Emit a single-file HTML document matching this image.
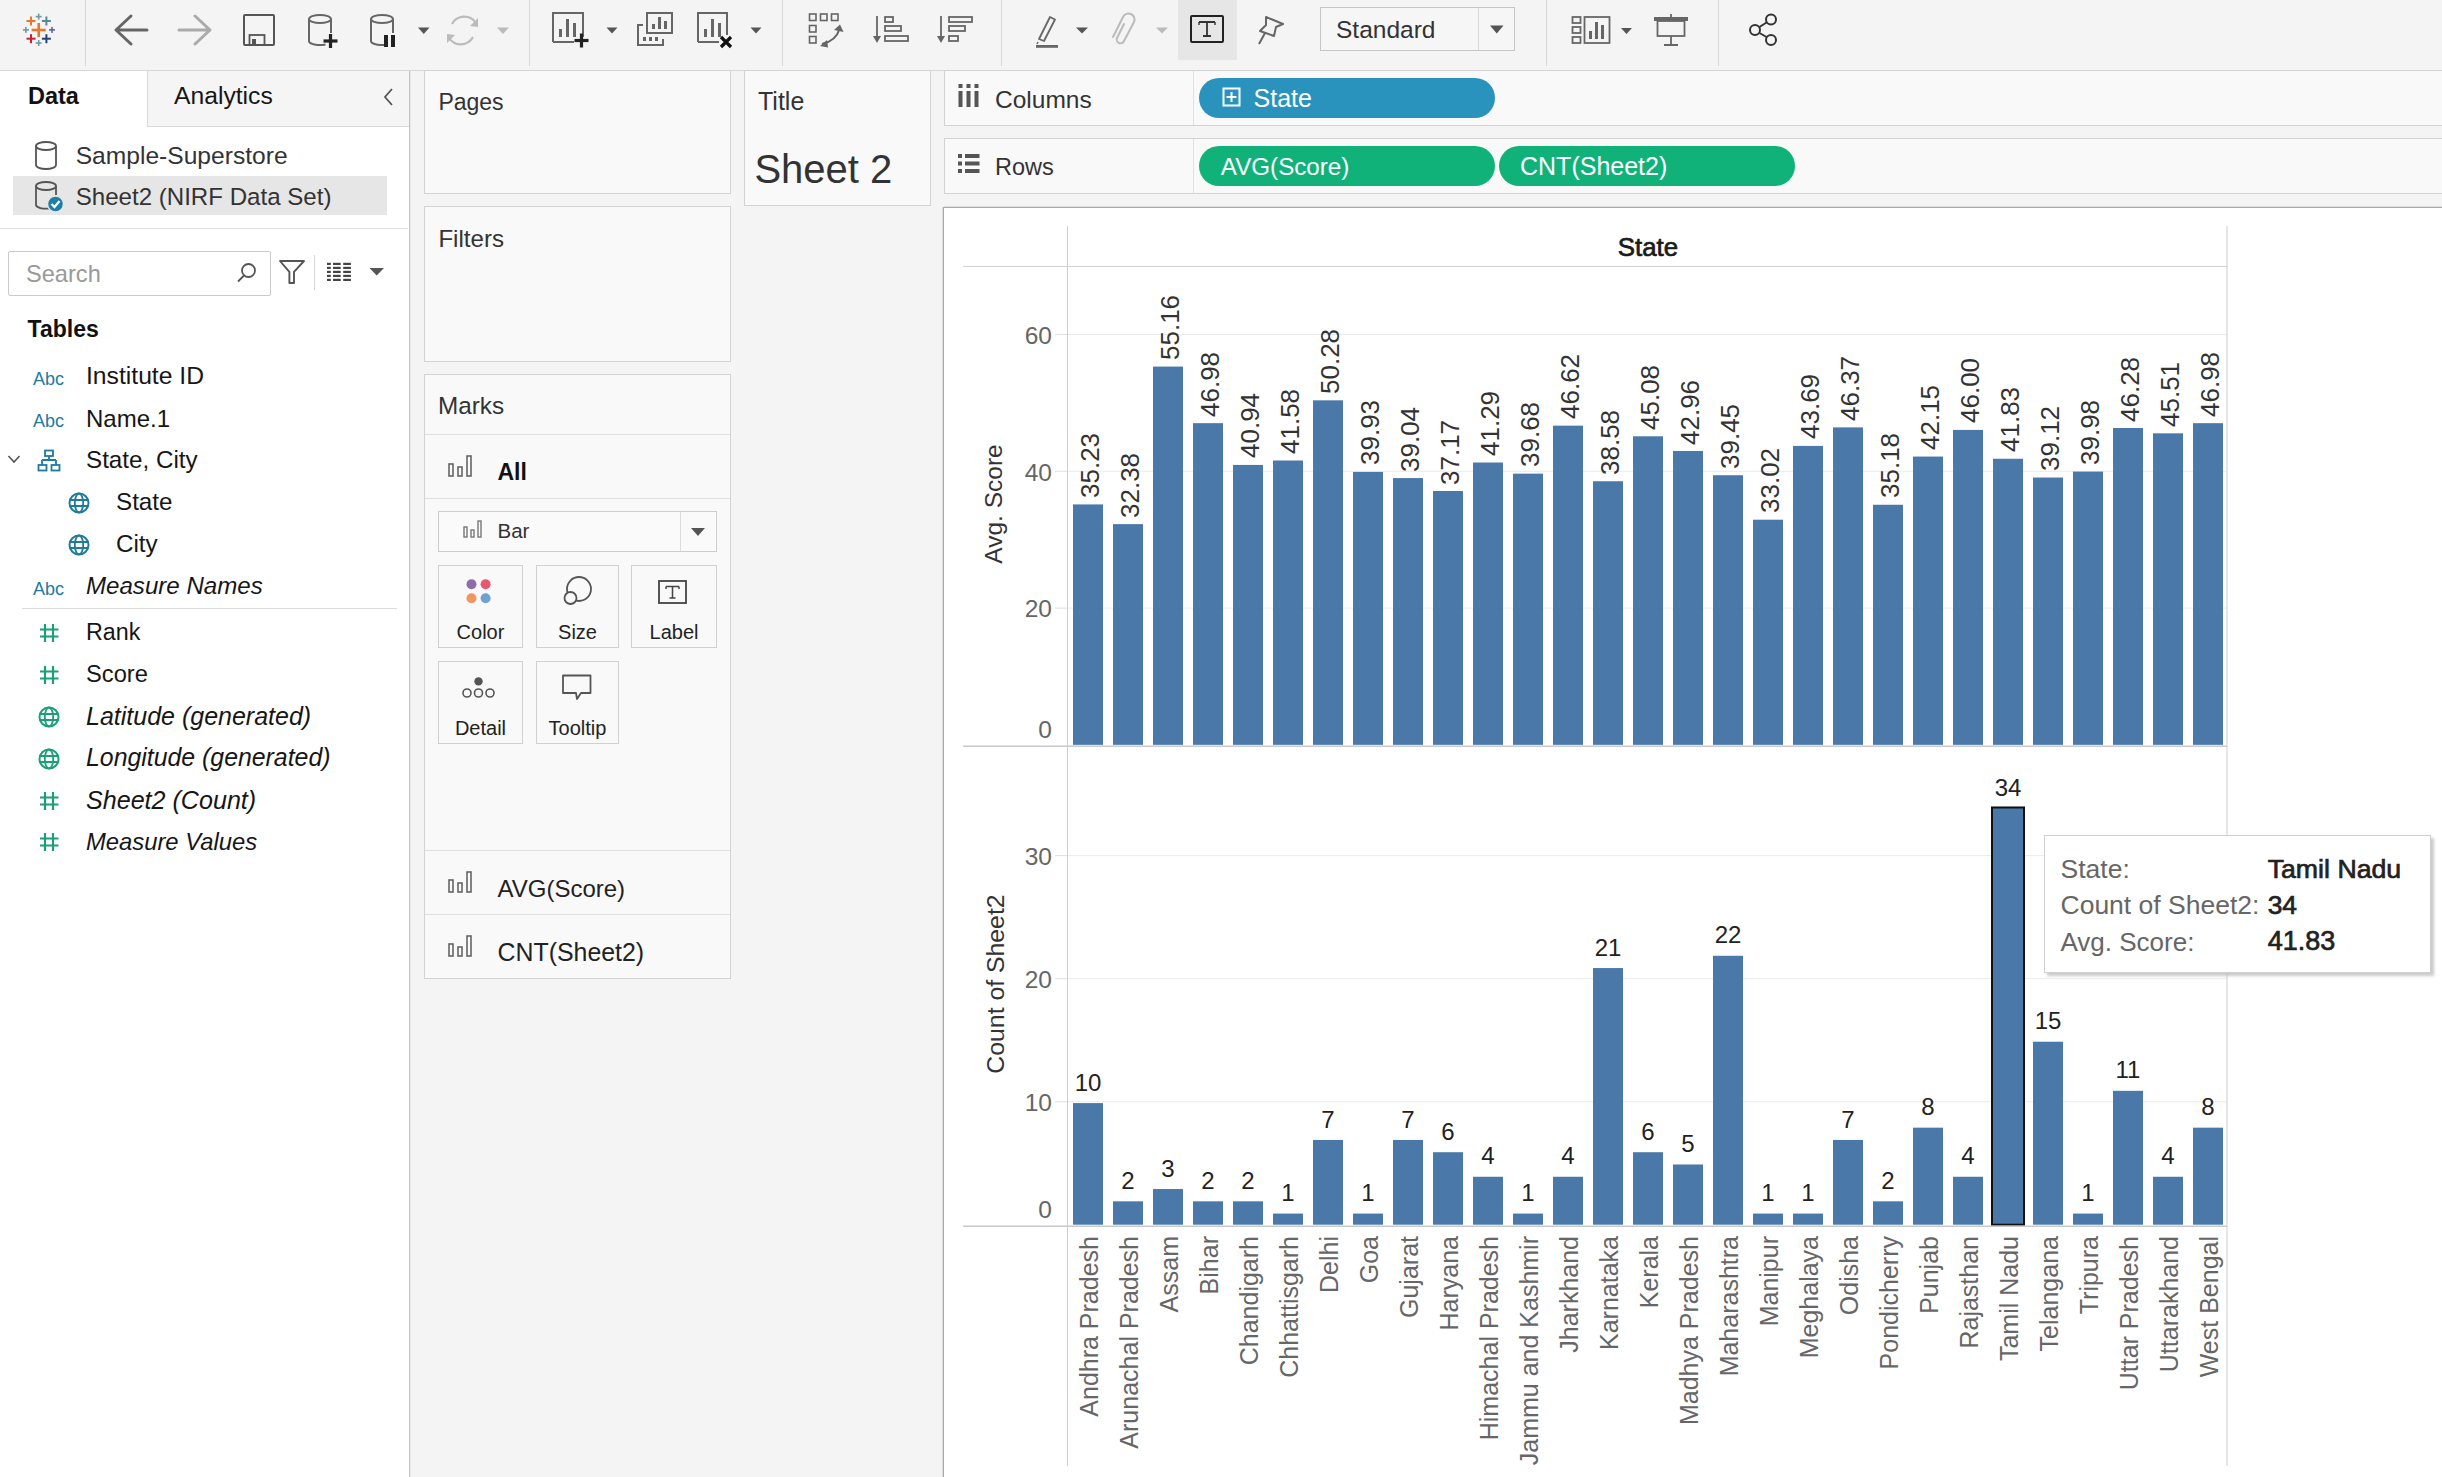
<!DOCTYPE html><html><head><meta charset="utf-8"><style>
html,body{margin:0;padding:0;}
body{width:2442px;height:1477px;overflow:hidden;position:relative;background:#f4f4f4;font-family:"Liberation Sans",sans-serif;}
.t{position:absolute;white-space:pre;}
.b{position:absolute;}
</style></head><body>
<div class="b" style="left:0px;top:0px;width:2442px;height:70px;background:#f4f4f4;"></div>
<div class="b" style="left:0px;top:70px;width:2442px;height:1px;background:#d6d6d6;"></div>
<div class="b" style="left:85px;top:0px;width:1px;height:66px;background:#d9d9d9;"></div>
<div class="b" style="left:529px;top:0px;width:1px;height:66px;background:#d9d9d9;"></div>
<div class="b" style="left:782px;top:0px;width:1px;height:66px;background:#d9d9d9;"></div>
<div class="b" style="left:1001px;top:0px;width:1px;height:66px;background:#d9d9d9;"></div>
<div class="b" style="left:1546px;top:0px;width:1px;height:66px;background:#d9d9d9;"></div>
<div class="b" style="left:1718px;top:0px;width:1px;height:66px;background:#d9d9d9;"></div>
<svg class="b" style="left:0;top:0" width="80" height="70"><rect x="31.700000000000003" y="28.7" width="14" height="2.6" fill="#e8762b"/><rect x="37.400000000000006" y="23" width="2.6" height="14" fill="#e8762b"/><rect x="26.5" y="20.0" width="9.0" height="2" fill="#e8762b"/><rect x="30.0" y="16.5" width="2" height="9.0" fill="#e8762b"/><rect x="41.9" y="20.0" width="9.0" height="2" fill="#5b879b"/><rect x="45.4" y="16.5" width="2" height="9.0" fill="#5b879b"/><rect x="26.5" y="37.7" width="9.0" height="2" fill="#c72037"/><rect x="30.0" y="34.2" width="2" height="9.0" fill="#c72037"/><rect x="41.9" y="37.7" width="9.0" height="2" fill="#1f457e"/><rect x="45.4" y="34.2" width="2" height="9.0" fill="#1f457e"/><rect x="35.7" y="15.8" width="6" height="1.6" fill="#7099a6"/><rect x="37.900000000000006" y="13.600000000000001" width="1.6" height="6" fill="#7099a6"/><rect x="35.7" y="42.2" width="6" height="1.6" fill="#7099a6"/><rect x="37.900000000000006" y="40" width="1.6" height="6" fill="#7099a6"/><rect x="22.9" y="29.099999999999998" width="6" height="1.6" fill="#7099a6"/><rect x="25.099999999999998" y="26.9" width="1.6" height="6" fill="#7099a6"/><rect x="49" y="29.099999999999998" width="6" height="1.6" fill="#5b6591"/><rect x="51.2" y="26.9" width="1.6" height="6" fill="#5b6591"/></svg>
<svg class="b" style="left:0;top:0" width="1200" height="70"><path d="M147 30 H117 M131 16 L116 30 L131 44" stroke="#666" stroke-width="3" fill="none" stroke-linecap="round" stroke-linejoin="round"/><path d="M179 30 H209 M195 16 L210 30 L195 44" stroke="#aaa" stroke-width="3" fill="none" stroke-linecap="round" stroke-linejoin="round"/><rect x="244" y="15" width="30" height="30" stroke="#555" stroke-width="2" fill="none" rx="1"/><rect x="249.5" y="35" width="15" height="10" stroke="#555" stroke-width="1.8" fill="none"/><rect x="252" y="39" width="4" height="5" fill="#555"/><ellipse cx="320.0" cy="19" rx="11.0" ry="4" stroke="#666" stroke-width="2" fill="none"/><path d="M309 19 V41 A11.0 4 0 0 0 325.5 44.5" stroke="#666" stroke-width="2" fill="none"/><path d="M331 19 V33" stroke="#666" stroke-width="2" fill="none"/><rect x="323.5" y="39.4" width="14" height="3.2" fill="#222"/><rect x="328.9" y="34" width="3.2" height="14" fill="#222"/><ellipse cx="382.0" cy="19" rx="11.0" ry="4" stroke="#666" stroke-width="2" fill="none"/><path d="M371 19 V41 A11.0 4 0 0 0 387.5 44.5" stroke="#666" stroke-width="2" fill="none"/><path d="M393 19 V33" stroke="#666" stroke-width="2" fill="none"/><rect x="384" y="35" width="4" height="12" fill="#222"/><rect x="391" y="35" width="4" height="12" fill="#222"/><path d="M418 27.5 H429.5 L423.75 34.0 Z" fill="#555"/><path d="M452 24 A14 14 0 0 1 476 23" stroke="#bbb" stroke-width="2.2" fill="none"/><path d="M473 37 A14 14 0 0 1 449 38" stroke="#bbb" stroke-width="2.2" fill="none"/><path d="M478 18 L478 27 L470 26 Z" fill="#bbb"/><path d="M447 43 L447 34 L455 35 Z" fill="#bbb"/><path d="M497 27.5 H509 L503.0 34.0 Z" fill="#bbb"/><path d="M553 42 V13 H583 V37" stroke="#666" stroke-width="2" fill="none"/><path d="M553 42 H574" stroke="#666" stroke-width="2" fill="none"/><rect x="559" y="29" width="3" height="8" fill="#666"/><rect x="566" y="19" width="3" height="18" fill="#666"/><rect x="573" y="23" width="3" height="14" fill="#666"/><rect x="574.5" y="38.9" width="14" height="3.2" fill="#222"/><rect x="579.9" y="33.5" width="3.2" height="14" fill="#222"/><path d="M606.5 27.5 H617.5 L612.0 33.5 Z" fill="#555"/><rect x="647" y="13" width="25" height="20" stroke="#666" stroke-width="2" fill="none"/><path d="M643 25 H638 V45 H663 V39" stroke="#666" stroke-width="2" fill="none"/><rect x="652" y="24" width="3" height="5" fill="#666"/><rect x="658" y="17" width="3" height="12" fill="#666"/><rect x="664" y="21" width="3" height="8" fill="#666"/><rect x="643" y="37" width="3" height="4" fill="#666"/><rect x="649" y="37" width="3" height="4" fill="#666"/><rect x="655" y="37" width="3" height="4" fill="#666"/><path d="M698 42 V13 H727 V35" stroke="#666" stroke-width="2" fill="none"/><path d="M698 42 H719" stroke="#666" stroke-width="2" fill="none"/><rect x="704" y="29" width="3" height="8" fill="#666"/><rect x="711" y="19" width="3" height="18" fill="#666"/><rect x="718" y="23" width="3" height="14" fill="#666"/><path d="M721 37 L731 47 M731 37 L721 47" stroke="#111" stroke-width="3.2"/><path d="M750.5 27.5 H761.5 L756.0 33.5 Z" fill="#555"/><rect x="809.5" y="14" width="6.5" height="6.5" stroke="#666" stroke-width="1.6" fill="none"/><rect x="820.5" y="14" width="6.5" height="6.5" stroke="#666" stroke-width="1.6" fill="none"/><rect x="831.5" y="14" width="6.5" height="6.5" stroke="#666" stroke-width="1.6" fill="none"/><rect x="809.5" y="25.5" width="6.5" height="6.5" stroke="#666" stroke-width="1.6" fill="none"/><rect x="809.5" y="36.5" width="6.5" height="6.5" stroke="#666" stroke-width="1.6" fill="none"/><path d="M822 44 Q836 41 839.5 29" stroke="#666" stroke-width="2" fill="none"/><path d="M834 30 L840 24.5 L843.5 32 Z" fill="#666"/><path d="M827 40 L820 46 L828 47.5 Z" fill="#666"/><path d="M877 16 V40" stroke="#666" stroke-width="1.8"/><path d="M873 36 L877 43 L881 36 Z" fill="#666"/><rect x="885" y="17" width="8" height="5" stroke="#666" stroke-width="1.8" fill="none"/><rect x="885" y="26" width="16" height="5" stroke="#666" stroke-width="1.8" fill="none"/><rect x="885" y="36" width="23" height="5" stroke="#666" stroke-width="1.8" fill="none"/><path d="M941 16 V40" stroke="#666" stroke-width="1.8"/><path d="M937 36 L941 43 L945 36 Z" fill="#666"/><rect x="949" y="17" width="23" height="5" stroke="#666" stroke-width="1.8" fill="none"/><rect x="949" y="26" width="16" height="5" stroke="#666" stroke-width="1.8" fill="none"/><rect x="949" y="36" width="9" height="5" stroke="#666" stroke-width="1.8" fill="none"/><path d="M1039 39 L1050 17 L1055 19.5 L1044 41 Z" stroke="#666" stroke-width="1.8" fill="none" stroke-linejoin="round"/><path d="M1038 42 L1037 44" stroke="#666" stroke-width="1.5"/><rect x="1036" y="45" width="22" height="2.8" fill="#666"/><path d="M1076 27.5 H1088 L1082.0 33.5 Z" fill="#555"/><path d="M1124 24 L1117 38 A3.5 3.5 0 0 0 1124 41 L1134 22 A6 6 0 0 0 1123 17 L1113 37" stroke="#bbb" stroke-width="2" fill="none" stroke-linecap="round"/><path d="M1156 27.5 H1168 L1162.0 33.5 Z" fill="#bbb"/></svg>
<div class="b" style="left:1178px;top:0px;width:59px;height:60px;background:#e6e6e6;"></div>
<svg class="b" style="left:1100px;top:0" width="250" height="70" viewBox="1100 0 250 70"><rect x="1191" y="16" width="32" height="26" stroke="#222" stroke-width="2" fill="none" rx="1"/><path d="M1199 22 H1215 M1207 22 V36 M1203 36 H1211" stroke="#333" stroke-width="1.8" fill="none"/><path d="M1199 22 V25 M1215 22 V25" stroke="#333" stroke-width="1.4"/><path d="M1266 17 L1283 24 L1276 27 L1274 36 L1260 31 L1266 25 Z" stroke="#666" stroke-width="2" fill="none" stroke-linejoin="round"/><path d="M1265 33 L1259 44" stroke="#666" stroke-width="2"/></svg>
<div class="b" style="left:1320px;top:7px;width:195px;height:44px;background:#f6f6f6;border:1px solid #c6c6c6;box-sizing:border-box;"></div>
<div class="b" style="left:1478px;top:8px;width:1px;height:42px;background:#d8d8d8;"></div>
<div class="t" style="left:1336.0px;top:18.1px;font-size:24.5px;line-height:24.5px;color:#333;">Standard</div>
<svg class="b" style="left:1450px;top:0" width="400" height="70" viewBox="1450 0 400 70"><path d="M1490 25.5 H1503.5 L1496.75 33.5 Z" fill="#555"/><rect x="1572.5" y="17" width="8" height="6" stroke="#666" stroke-width="1.8" fill="none"/><rect x="1572.5" y="27" width="8" height="6" stroke="#666" stroke-width="1.8" fill="none"/><rect x="1572.5" y="37" width="8" height="6" stroke="#666" stroke-width="1.8" fill="none"/><rect x="1584.5" y="17" width="25" height="26" stroke="#666" stroke-width="1.8" fill="none"/><rect x="1589" y="31" width="3" height="8" fill="#666"/><rect x="1595" y="22" width="3" height="17" fill="#666"/><rect x="1601" y="25" width="3" height="14" fill="#666"/><path d="M1621 28 H1632 L1626.5 34 Z" fill="#555"/><rect x="1654" y="17" width="34" height="4" fill="#666"/><rect x="1657.5" y="21" width="27" height="15" stroke="#666" stroke-width="1.8" fill="none"/><path d="M1671 14 V17 M1671 36 V44 M1664 45 H1678" stroke="#666" stroke-width="1.8"/><circle cx="1771" cy="19.5" r="5" stroke="#333" stroke-width="2" fill="none"/><circle cx="1755" cy="30" r="5" stroke="#333" stroke-width="2" fill="none"/><circle cx="1771" cy="40" r="5" stroke="#333" stroke-width="2" fill="none"/><path d="M1759.5 27 L1766.5 22.5 M1759.5 33 L1766.5 37" stroke="#333" stroke-width="2"/></svg>
<div class="b" style="left:0px;top:71px;width:409px;height:1406px;background:#ffffff;"></div>
<div class="b" style="left:409px;top:71px;width:1px;height:1406px;background:#c6c6c6;"></div>
<div class="b" style="left:410px;top:71px;width:1px;height:1406px;background:#e6e6e6;"></div>
<div class="b" style="left:147px;top:71px;width:262px;height:56px;background:#f5f5f5;"></div>
<div class="b" style="left:147px;top:71px;width:1px;height:56px;background:#d9d9d9;"></div>
<div class="b" style="left:147px;top:126px;width:262px;height:1px;background:#d9d9d9;"></div>
<div class="t" style="left:28.0px;top:85.1px;font-size:23.5px;line-height:23.5px;color:#111;font-weight:700;">Data</div>
<div class="t" style="left:174.0px;top:84.1px;font-size:24.7px;line-height:24.7px;color:#161616;">Analytics</div>
<svg class="b" style="left:378px;top:84px" width="20" height="26" viewBox="0 0 20 26"><path d="M14 5 L7 13 L14 21" stroke="#555" stroke-width="1.8" fill="none"/></svg>
<svg class="b" style="left:35px;top:141px" width="24" height="31" viewBox="0 0 24 31"><ellipse cx="11" cy="5" rx="10" ry="4" stroke="#555" stroke-width="1.8" fill="none"/><path d="M1 5 V24 A10 4 0 0 0 21 24 V5" stroke="#555" stroke-width="1.8" fill="none"/></svg>
<div class="t" style="left:75.7px;top:143.8px;font-size:24.6px;line-height:24.6px;color:#333;">Sample-Superstore</div>
<div class="b" style="left:13px;top:176px;width:374px;height:39px;background:#e6e6e6;"></div>
<svg class="b" style="left:35px;top:181px" width="32" height="34" viewBox="0 0 32 34"><ellipse cx="11" cy="5" rx="10" ry="4" stroke="#555" stroke-width="1.8" fill="none"/><path d="M1 5 V24 A10 4 0 0 0 14 27.5" stroke="#555" stroke-width="1.8" fill="none"/><path d="M21 5 V14" stroke="#555" stroke-width="1.8" fill="none"/><circle cx="20.5" cy="23" r="8" fill="#1f7ea6" stroke="#e6e6e6" stroke-width="1.5"/><path d="M16.5 23 L19.5 26 L24.5 20" stroke="#fff" stroke-width="2.2" fill="none"/></svg>
<div class="t" style="left:75.7px;top:184.6px;font-size:24.1px;line-height:24.1px;color:#333;">Sheet2 (NIRF Data Set)</div>
<div class="b" style="left:0px;top:228px;width:408px;height:1px;background:#e2e2e2;"></div>
<div class="b" style="left:8px;top:251px;width:263px;height:45px;background:#fff;border:1.5px solid #cacaca;box-sizing:border-box;border-radius:2px;"></div>
<div class="t" style="left:26.0px;top:262.6px;font-size:23.6px;line-height:23.6px;color:#999;">Search</div>
<svg class="b" style="left:236px;top:262px" width="22" height="22" viewBox="0 0 22 22"><circle cx="12.5" cy="8.5" r="6.5" stroke="#555" stroke-width="1.8" fill="none"/><path d="M8 13.5 L2 19.5" stroke="#555" stroke-width="1.8"/></svg>
<svg class="b" style="left:277px;top:258px" width="30" height="28" viewBox="0 0 30 28"><path d="M3 3 H27 L17 13.8 V25 H12.4 V13.8 Z" stroke="#555" stroke-width="1.9" fill="none" stroke-linejoin="round"/></svg>
<div class="b" style="left:314px;top:255px;width:1px;height:35px;background:#d6d6d6;"></div>
<svg class="b" style="left:327px;top:261px" width="25" height="22" viewBox="0 0 25 22"><rect x="0" y="1.8" width="3.8" height="2.2" fill="#444"/><rect x="6" y="1.8" width="7.7" height="2.2" fill="#444"/><rect x="16.2" y="1.8" width="7.7" height="2.2" fill="#444"/><rect x="0" y="5.8" width="3.8" height="2.2" fill="#444"/><rect x="6" y="5.8" width="7.7" height="2.2" fill="#444"/><rect x="16.2" y="5.8" width="7.7" height="2.2" fill="#444"/><rect x="0" y="9.8" width="3.8" height="2.2" fill="#444"/><rect x="6" y="9.8" width="7.7" height="2.2" fill="#444"/><rect x="16.2" y="9.8" width="7.7" height="2.2" fill="#444"/><rect x="0" y="13.8" width="3.8" height="2.2" fill="#444"/><rect x="6" y="13.8" width="7.7" height="2.2" fill="#444"/><rect x="16.2" y="13.8" width="7.7" height="2.2" fill="#444"/><rect x="0" y="17.8" width="3.8" height="2.2" fill="#444"/><rect x="6" y="17.8" width="7.7" height="2.2" fill="#444"/><rect x="16.2" y="17.8" width="7.7" height="2.2" fill="#444"/></svg>
<svg class="b" style="left:366px;top:264px" width="20" height="14" viewBox="0 0 20 14"><path d="M3.5 4 H18 L10.7 11.6 Z" fill="#555"/></svg>
<div class="t" style="left:27.6px;top:317.9px;font-size:23px;line-height:23px;color:#111;font-weight:700;">Tables</div>
<div class="t" style="left:33.0px;top:369.6px;font-size:18px;line-height:18px;color:#1f7b9c;">Abc</div>
<div class="t" style="left:86.0px;top:363.9px;font-size:24.7px;line-height:24.7px;color:#161616;">Institute ID</div>
<div class="t" style="left:33.0px;top:411.6px;font-size:18px;line-height:18px;color:#1f7b9c;">Abc</div>
<div class="t" style="left:86.0px;top:406.5px;font-size:24px;line-height:24px;color:#161616;">Name.1</div>
<svg class="b" style="left:7px;top:453px" width="16" height="14" viewBox="0 0 16 14"><path d="M1.5 3 L7 9 L12.5 3" stroke="#555" stroke-width="1.6" fill="none"/></svg>
<svg class="b" style="left:37px;top:449px" width="24" height="24" viewBox="0 0 24 24"><rect x="8" y="1.5" width="8" height="5.5" stroke="#1f7b9c" stroke-width="1.8" fill="none"/><path d="M12 7 V11 M5 11 H19 M5 11 V16 M19 11 V16" stroke="#1f7b9c" stroke-width="1.8" fill="none"/><rect x="1.5" y="16" width="8" height="5.5" stroke="#1f7b9c" stroke-width="1.8" fill="none"/><rect x="14.5" y="16" width="8" height="5.5" stroke="#1f7b9c" stroke-width="1.8" fill="none"/></svg>
<div class="t" style="left:86.0px;top:448.3px;font-size:24.2px;line-height:24.2px;color:#161616;">State, City</div>
<svg class="b" style="left:68px;top:492px" width="22" height="22" viewBox="0 0 22 22"><circle cx="11" cy="11" r="9.5" stroke="#1f7b9c" stroke-width="2" fill="none"/><ellipse cx="11" cy="11" rx="4.2" ry="9.5" stroke="#1f7b9c" stroke-width="1.8" fill="none"/><path d="M1.5 8 H20.5 M1.5 14 H20.5" stroke="#1f7b9c" stroke-width="1.8"/></svg>
<div class="t" style="left:116.0px;top:490.2px;font-size:24.2px;line-height:24.2px;color:#161616;">State</div>
<svg class="b" style="left:68px;top:534px" width="22" height="22" viewBox="0 0 22 22"><circle cx="11" cy="11" r="9.5" stroke="#1f7b9c" stroke-width="2" fill="none"/><ellipse cx="11" cy="11" rx="4.2" ry="9.5" stroke="#1f7b9c" stroke-width="1.8" fill="none"/><path d="M1.5 8 H20.5 M1.5 14 H20.5" stroke="#1f7b9c" stroke-width="1.8"/></svg>
<div class="t" style="left:116.0px;top:532.2px;font-size:24.2px;line-height:24.2px;color:#161616;">City</div>
<div class="t" style="left:33.0px;top:579.5px;font-size:18px;line-height:18px;color:#1f7b9c;">Abc</div>
<div class="t" style="left:86.0px;top:574.3px;font-size:24.1px;line-height:24.1px;color:#161616;font-style:italic;">Measure Names</div>
<div class="b" style="left:22px;top:608px;width:375px;height:1px;background:#dcdcdc;"></div>
<svg class="b" style="left:39px;top:623px" width="21" height="20" viewBox="0 0 21 20"><path d="M6 1 V19 M14 1 V19 M1 6.5 H19.5 M1 13.5 H19.5" stroke="#1a9f78" stroke-width="2.2"/></svg>
<div class="t" style="left:86.0px;top:621.3px;font-size:23.3px;line-height:23.3px;color:#161616;">Rank</div>
<svg class="b" style="left:39px;top:665px" width="21" height="20" viewBox="0 0 21 20"><path d="M6 1 V19 M14 1 V19 M1 6.5 H19.5 M1 13.5 H19.5" stroke="#1a9f78" stroke-width="2.2"/></svg>
<div class="t" style="left:86.0px;top:662.7px;font-size:23.7px;line-height:23.7px;color:#161616;">Score</div>
<svg class="b" style="left:38px;top:706px" width="22" height="22" viewBox="0 0 22 22"><circle cx="11" cy="11" r="9.5" stroke="#1a9f78" stroke-width="2" fill="none"/><ellipse cx="11" cy="11" rx="4.2" ry="9.5" stroke="#1a9f78" stroke-width="1.8" fill="none"/><path d="M1.5 8 H20.5 M1.5 14 H20.5" stroke="#1a9f78" stroke-width="1.8"/></svg>
<div class="t" style="left:86.0px;top:703.8px;font-size:25px;line-height:25px;color:#161616;font-style:italic;">Latitude (generated)</div>
<svg class="b" style="left:38px;top:748px" width="22" height="22" viewBox="0 0 22 22"><circle cx="11" cy="11" r="9.5" stroke="#1a9f78" stroke-width="2" fill="none"/><ellipse cx="11" cy="11" rx="4.2" ry="9.5" stroke="#1a9f78" stroke-width="1.8" fill="none"/><path d="M1.5 8 H20.5 M1.5 14 H20.5" stroke="#1a9f78" stroke-width="1.8"/></svg>
<div class="t" style="left:86.0px;top:745.7px;font-size:24.85px;line-height:24.85px;color:#161616;font-style:italic;">Longitude (generated)</div>
<svg class="b" style="left:39px;top:791px" width="21" height="20" viewBox="0 0 21 20"><path d="M6 1 V19 M14 1 V19 M1 6.5 H19.5 M1 13.5 H19.5" stroke="#1a9f78" stroke-width="2.2"/></svg>
<div class="t" style="left:86.0px;top:787.8px;font-size:25.1px;line-height:25.1px;color:#161616;font-style:italic;">Sheet2 (Count)</div>
<svg class="b" style="left:39px;top:832px" width="21" height="20" viewBox="0 0 21 20"><path d="M6 1 V19 M14 1 V19 M1 6.5 H19.5 M1 13.5 H19.5" stroke="#1a9f78" stroke-width="2.2"/></svg>
<div class="t" style="left:86.0px;top:829.9px;font-size:23.8px;line-height:23.8px;color:#161616;font-style:italic;">Measure Values</div>
<div class="b" style="left:424px;top:70px;width:307px;height:124px;background:#f9f9f9;border:1px solid #d3d3d3;box-sizing:border-box;"></div>
<div class="t" style="left:438.4px;top:91.0px;font-size:23px;line-height:23px;color:#333;">Pages</div>
<div class="b" style="left:424px;top:206px;width:307px;height:156px;background:#f9f9f9;border:1px solid #d3d3d3;box-sizing:border-box;"></div>
<div class="t" style="left:438.4px;top:226.6px;font-size:24.1px;line-height:24.1px;color:#333;">Filters</div>
<div class="b" style="left:424px;top:374px;width:307px;height:605px;background:#f9f9f9;border:1px solid #d3d3d3;box-sizing:border-box;"></div>
<div class="t" style="left:438.0px;top:394.4px;font-size:24.3px;line-height:24.3px;color:#333;">Marks</div>
<div class="b" style="left:425px;top:434px;width:305px;height:1px;background:#dedede;"></div>
<svg class="b" style="left:448px;top:455px" width="24" height="22" viewBox="0 0 24 22"><rect x="1" y="9" width="4" height="12" stroke="#666" stroke-width="1.6" fill="none"/><rect x="10" y="12" width="4" height="9" stroke="#666" stroke-width="1.6" fill="none"/><rect x="19" y="1" width="4" height="20" stroke="#666" stroke-width="1.6" fill="none"/></svg>
<div class="t" style="left:497.5px;top:461.2px;font-size:23px;line-height:23px;color:#111;font-weight:700;">All</div>
<div class="b" style="left:425px;top:498px;width:305px;height:1px;background:#dedede;"></div>
<div class="b" style="left:438px;top:511px;width:279px;height:41px;background:#fafafa;border:1px solid #cdcdcd;box-sizing:border-box;"></div>
<div class="b" style="left:680px;top:512px;width:1px;height:39px;background:#dddddd;"></div>
<svg class="b" style="left:690px;top:526px" width="16" height="12" viewBox="0 0 16 12"><path d="M1 2 H15 L8 10 Z" fill="#555"/></svg>
<svg class="b" style="left:463px;top:520px" width="19" height="18" viewBox="0 0 19 18"><rect x="1" y="7" width="3" height="10" stroke="#777" stroke-width="1.4" fill="none"/><rect x="8" y="10" width="3" height="7" stroke="#777" stroke-width="1.4" fill="none"/><rect x="15" y="1" width="3" height="16" stroke="#777" stroke-width="1.4" fill="none"/></svg>
<div class="t" style="left:497.5px;top:521.0px;font-size:20.5px;line-height:20.5px;color:#333;">Bar</div>
<div class="b" style="left:438px;top:565px;width:85px;height:83px;background:#f9f9f9;border:1px solid #d0d0d0;box-sizing:border-box;"></div>
<div class="t" style="left:280.5px;width:400px;text-align:center;top:621.6px;font-size:20px;line-height:20px;color:#222;">Color</div>
<div class="b" style="left:536px;top:565px;width:83px;height:83px;background:#f9f9f9;border:1px solid #d0d0d0;box-sizing:border-box;"></div>
<div class="t" style="left:377.5px;width:400px;text-align:center;top:621.6px;font-size:20px;line-height:20px;color:#222;">Size</div>
<div class="b" style="left:631px;top:565px;width:86px;height:83px;background:#f9f9f9;border:1px solid #d0d0d0;box-sizing:border-box;"></div>
<div class="t" style="left:474.0px;width:400px;text-align:center;top:621.6px;font-size:20px;line-height:20px;color:#222;">Label</div>
<div class="b" style="left:438px;top:661px;width:85px;height:83px;background:#f9f9f9;border:1px solid #d0d0d0;box-sizing:border-box;"></div>
<div class="t" style="left:280.5px;width:400px;text-align:center;top:717.6px;font-size:20px;line-height:20px;color:#222;">Detail</div>
<div class="b" style="left:536px;top:661px;width:83px;height:83px;background:#f9f9f9;border:1px solid #d0d0d0;box-sizing:border-box;"></div>
<div class="t" style="left:377.5px;width:400px;text-align:center;top:717.6px;font-size:20px;line-height:20px;color:#222;">Tooltip</div>
<svg class="b" style="left:462px;top:575px" width="34" height="34" viewBox="0 0 34 34"><circle cx="9.5" cy="9.2" r="5" fill="#8e6bab"/><circle cx="23.6" cy="9.2" r="5" fill="#e8566f"/><circle cx="9.5" cy="23.3" r="5" fill="#f29562"/><circle cx="23.6" cy="23.3" r="5" fill="#6fa1d2"/></svg>
<svg class="b" style="left:560px;top:572px" width="36" height="36" viewBox="0 0 36 36"><circle cx="19" cy="17" r="12" stroke="#555" stroke-width="1.8" fill="none"/><circle cx="10.5" cy="26" r="6" stroke="#555" stroke-width="1.8" fill="#f9f9f9"/></svg>
<svg class="b" style="left:656px;top:578px" width="34" height="30" viewBox="0 0 34 30"><rect x="3" y="3" width="27" height="22" stroke="#444" stroke-width="1.8" fill="none"/><path d="M10 8.5 H23 M16.5 8.5 V20 M13.5 20 H19.5 M10 8.5 V11 M23 8.5 V11" stroke="#444" stroke-width="1.5" fill="none"/></svg>
<svg class="b" style="left:460px;top:672px" width="36" height="30" viewBox="0 0 36 30"><circle cx="18.5" cy="9.4" r="4.2" fill="#555"/><circle cx="7" cy="21" r="4" stroke="#555" stroke-width="1.6" fill="none"/><circle cx="18.5" cy="21" r="4" stroke="#555" stroke-width="1.6" fill="none"/><circle cx="30" cy="21" r="4" stroke="#555" stroke-width="1.6" fill="none"/></svg>
<svg class="b" style="left:560px;top:672px" width="36" height="32" viewBox="0 0 36 32"><path d="M3 3.5 H30.5 V21 H21 L17 27 L16 21 H3 Z" stroke="#555" stroke-width="1.8" fill="none" stroke-linejoin="round"/></svg>
<div class="b" style="left:425px;top:850px;width:305px;height:1px;background:#dedede;"></div>
<svg class="b" style="left:448px;top:871px" width="24" height="22" viewBox="0 0 24 22"><rect x="1" y="9" width="4" height="12" stroke="#666" stroke-width="1.6" fill="none"/><rect x="10" y="12" width="4" height="9" stroke="#666" stroke-width="1.6" fill="none"/><rect x="19" y="1" width="4" height="20" stroke="#666" stroke-width="1.6" fill="none"/></svg>
<div class="t" style="left:497.5px;top:877.4px;font-size:24px;line-height:24px;color:#222;">AVG(Score)</div>
<div class="b" style="left:425px;top:914px;width:305px;height:1px;background:#dedede;"></div>
<svg class="b" style="left:448px;top:935px" width="24" height="22" viewBox="0 0 24 22"><rect x="1" y="9" width="4" height="12" stroke="#666" stroke-width="1.6" fill="none"/><rect x="10" y="12" width="4" height="9" stroke="#666" stroke-width="1.6" fill="none"/><rect x="19" y="1" width="4" height="20" stroke="#666" stroke-width="1.6" fill="none"/></svg>
<div class="t" style="left:497.5px;top:940.3px;font-size:24.9px;line-height:24.9px;color:#222;">CNT(Sheet2)</div>
<div class="b" style="left:744px;top:70px;width:187px;height:136px;background:#f9f9f9;border:1px solid #d3d3d3;box-sizing:border-box;"></div>
<div class="t" style="left:758.0px;top:89.3px;font-size:25px;line-height:25px;color:#333;">Title</div>
<div class="t" style="left:754.4px;top:149.1px;font-size:40px;line-height:40px;color:#333;">Sheet 2</div>
<div class="b" style="left:944px;top:70px;width:1498px;height:56px;background:#f9f9f9;border:1px solid #d3d3d3;box-sizing:border-box;border-right:none;"></div>
<div class="b" style="left:944px;top:138px;width:1498px;height:56px;background:#f9f9f9;border:1px solid #d3d3d3;box-sizing:border-box;border-right:none;"></div>
<div class="b" style="left:1193px;top:71px;width:1px;height:54px;background:#e0e0e0;"></div>
<div class="b" style="left:1193px;top:139px;width:1px;height:54px;background:#e0e0e0;"></div>
<svg class="b" style="left:957px;top:83px" width="24" height="26" viewBox="0 0 24 26"><rect x="1.5" y="1" width="4" height="4" fill="#555"/><rect x="9.5" y="1" width="4" height="4" fill="#555"/><rect x="17.5" y="1" width="4" height="4" fill="#555"/><rect x="1.5" y="8" width="4" height="16" fill="#555"/><rect x="9.5" y="8" width="4" height="16" fill="#555"/><rect x="17.5" y="8" width="4" height="16" fill="#555"/></svg>
<div class="t" style="left:995.0px;top:87.6px;font-size:24.5px;line-height:24.5px;color:#333;">Columns</div>
<svg class="b" style="left:957px;top:152px" width="24" height="24" viewBox="0 0 24 24"><rect x="1" y="2" width="4" height="4" fill="#555"/><rect x="8" y="2" width="14.5" height="4" fill="#555"/><rect x="1" y="9.5" width="4" height="4" fill="#555"/><rect x="8" y="9.5" width="14.5" height="4" fill="#555"/><rect x="1" y="17" width="4" height="4" fill="#555"/><rect x="8" y="17" width="14.5" height="4" fill="#555"/></svg>
<div class="t" style="left:995.0px;top:155.7px;font-size:23.5px;line-height:23.5px;color:#333;">Rows</div>
<div class="b" style="left:1199px;top:78px;width:296px;height:40px;background:#2a93bd;border-radius:20px;"></div>
<svg class="b" style="left:1222px;top:87px" width="20" height="21" viewBox="0 0 20 21"><rect x="1.5" y="1.5" width="16" height="17" stroke="#fff" stroke-width="2" fill="none"/><path d="M9.5 5 V15 M4.5 10 H14.5" stroke="#fff" stroke-width="2"/></svg>
<div class="t" style="left:1253.6px;top:86.3px;font-size:25px;line-height:25px;color:#fff;">State</div>
<div class="b" style="left:1199px;top:146px;width:296px;height:40px;background:#10b27a;border-radius:20px;"></div>
<div class="t" style="left:1220.8px;top:154.5px;font-size:24.2px;line-height:24.2px;color:#fff;">AVG(Score)</div>
<div class="b" style="left:1499px;top:146px;width:296px;height:40px;background:#10b27a;border-radius:20px;"></div>
<div class="t" style="left:1520.0px;top:153.8px;font-size:25px;line-height:25px;color:#fff;">CNT(Sheet2)</div>
<div class="b" style="left:944px;top:207px;width:1498px;height:1270px;background:#ffffff;"></div>
<div class="b" style="left:943px;top:207px;width:1499px;height:1px;background:#a9a9a9;"></div>
<div class="b" style="left:944px;top:206px;width:1498px;height:1px;background:#dcdcdc;"></div>
<div class="b" style="left:943px;top:207px;width:1px;height:1270px;background:#a9a9a9;"></div>
<div class="b" style="left:942px;top:207px;width:1px;height:1270px;background:#dedede;"></div>
<svg class="b" style="left:0;top:0" width="2442" height="1477"><rect x="1068" y="607.60" width="1159" height="1" fill="#ececec"/><rect x="1055" y="607.60" width="12" height="1" fill="#e0e0e0"/><rect x="1068" y="470.80" width="1159" height="1" fill="#ececec"/><rect x="1055" y="470.80" width="12" height="1" fill="#e0e0e0"/><rect x="1068" y="334.00" width="1159" height="1" fill="#ececec"/><rect x="1055" y="334.00" width="12" height="1" fill="#e0e0e0"/><rect x="1068" y="1101.30" width="1159" height="1" fill="#ececec"/><rect x="1055" y="1101.30" width="12" height="1" fill="#e0e0e0"/><rect x="1068" y="978.20" width="1159" height="1" fill="#ececec"/><rect x="1055" y="978.20" width="12" height="1" fill="#e0e0e0"/><rect x="1068" y="855.10" width="1159" height="1" fill="#ececec"/><rect x="1055" y="855.10" width="12" height="1" fill="#e0e0e0"/><rect x="1073" y="504.42" width="30" height="240.43" fill="#4a79a9"/><rect x="1113" y="524.13" width="30" height="220.72" fill="#4a79a9"/><rect x="1153" y="366.58" width="30" height="378.27" fill="#4a79a9"/><rect x="1193" y="423.16" width="30" height="321.69" fill="#4a79a9"/><rect x="1233" y="464.93" width="30" height="279.92" fill="#4a79a9"/><rect x="1273" y="460.50" width="30" height="284.35" fill="#4a79a9"/><rect x="1313" y="400.33" width="30" height="344.52" fill="#4a79a9"/><rect x="1353" y="471.91" width="30" height="272.94" fill="#4a79a9"/><rect x="1393" y="478.07" width="30" height="266.78" fill="#4a79a9"/><rect x="1433" y="491.00" width="30" height="253.85" fill="#4a79a9"/><rect x="1473" y="462.51" width="30" height="282.34" fill="#4a79a9"/><rect x="1513" y="473.64" width="30" height="271.21" fill="#4a79a9"/><rect x="1553" y="425.65" width="30" height="319.20" fill="#4a79a9"/><rect x="1593" y="481.25" width="30" height="263.60" fill="#4a79a9"/><rect x="1633" y="436.30" width="30" height="308.55" fill="#4a79a9"/><rect x="1673" y="450.96" width="30" height="293.89" fill="#4a79a9"/><rect x="1713" y="475.23" width="30" height="269.62" fill="#4a79a9"/><rect x="1753" y="519.70" width="30" height="225.15" fill="#4a79a9"/><rect x="1793" y="445.91" width="30" height="298.94" fill="#4a79a9"/><rect x="1833" y="427.38" width="30" height="317.47" fill="#4a79a9"/><rect x="1873" y="504.77" width="30" height="240.08" fill="#4a79a9"/><rect x="1913" y="456.56" width="30" height="288.29" fill="#4a79a9"/><rect x="1953" y="429.93" width="30" height="314.92" fill="#4a79a9"/><rect x="1993" y="458.77" width="30" height="286.08" fill="#4a79a9"/><rect x="2033" y="477.52" width="30" height="267.33" fill="#4a79a9"/><rect x="2073" y="471.57" width="30" height="273.28" fill="#4a79a9"/><rect x="2113" y="428.00" width="30" height="316.85" fill="#4a79a9"/><rect x="2153" y="433.32" width="30" height="311.53" fill="#4a79a9"/><rect x="2193" y="423.16" width="30" height="321.69" fill="#4a79a9"/><rect x="1073" y="1103.10" width="30" height="121.60" fill="#4a79a9"/><rect x="1113" y="1201.31" width="30" height="23.39" fill="#4a79a9"/><rect x="1153" y="1189.03" width="30" height="35.67" fill="#4a79a9"/><rect x="1193" y="1201.31" width="30" height="23.39" fill="#4a79a9"/><rect x="1233" y="1201.31" width="30" height="23.39" fill="#4a79a9"/><rect x="1273" y="1213.58" width="30" height="11.12" fill="#4a79a9"/><rect x="1313" y="1139.93" width="30" height="84.77" fill="#4a79a9"/><rect x="1353" y="1213.58" width="30" height="11.12" fill="#4a79a9"/><rect x="1393" y="1139.93" width="30" height="84.77" fill="#4a79a9"/><rect x="1433" y="1152.20" width="30" height="72.50" fill="#4a79a9"/><rect x="1473" y="1176.76" width="30" height="47.94" fill="#4a79a9"/><rect x="1513" y="1213.58" width="30" height="11.12" fill="#4a79a9"/><rect x="1553" y="1176.76" width="30" height="47.94" fill="#4a79a9"/><rect x="1593" y="968.06" width="30" height="256.64" fill="#4a79a9"/><rect x="1633" y="1152.20" width="30" height="72.50" fill="#4a79a9"/><rect x="1673" y="1164.48" width="30" height="60.22" fill="#4a79a9"/><rect x="1713" y="955.79" width="30" height="268.91" fill="#4a79a9"/><rect x="1753" y="1213.58" width="30" height="11.12" fill="#4a79a9"/><rect x="1793" y="1213.58" width="30" height="11.12" fill="#4a79a9"/><rect x="1833" y="1139.93" width="30" height="84.77" fill="#4a79a9"/><rect x="1873" y="1201.31" width="30" height="23.39" fill="#4a79a9"/><rect x="1913" y="1127.65" width="30" height="97.05" fill="#4a79a9"/><rect x="1953" y="1176.76" width="30" height="47.94" fill="#4a79a9"/><rect x="1992" y="807.48" width="32" height="417.22" fill="#4a79a9" stroke="#111" stroke-width="2"/><rect x="2033" y="1041.72" width="30" height="182.98" fill="#4a79a9"/><rect x="2073" y="1213.58" width="30" height="11.12" fill="#4a79a9"/><rect x="2113" y="1090.82" width="30" height="133.88" fill="#4a79a9"/><rect x="2153" y="1176.76" width="30" height="47.94" fill="#4a79a9"/><rect x="2193" y="1127.65" width="30" height="97.05" fill="#4a79a9"/><rect x="1067" y="226" width="1" height="1240" fill="#cdcdcd"/><rect x="2226.5" y="226" width="1" height="1240" fill="#cdcdcd"/><rect x="963" y="266" width="1264" height="1" fill="#d2d2d2"/><rect x="963" y="745.5" width="1264" height="1.4" fill="#c6c6c6"/><rect x="963" y="1225.5" width="1264" height="1.4" fill="#c6c6c6"/></svg>
<div class="t" style="left:1447.9px;width:400px;text-align:center;top:234.9px;font-size:25.8px;line-height:25.8px;color:#1a1a1a;-webkit-text-stroke:0.7px #1a1a1a;">State</div>
<div class="t" style="left:652.0px;width:400px;text-align:right;top:597.4px;font-size:24.5px;line-height:24.5px;color:#666;">20</div>
<div class="t" style="left:652.0px;width:400px;text-align:right;top:460.6px;font-size:24.5px;line-height:24.5px;color:#666;">40</div>
<div class="t" style="left:652.0px;width:400px;text-align:right;top:323.8px;font-size:24.5px;line-height:24.5px;color:#666;">60</div>
<div class="t" style="left:652.0px;width:400px;text-align:right;top:718.3px;font-size:24.5px;line-height:24.5px;color:#666;">0</div>
<div class="t" style="left:652.0px;width:400px;text-align:right;top:1091.1px;font-size:24.5px;line-height:24.5px;color:#666;">10</div>
<div class="t" style="left:652.0px;width:400px;text-align:right;top:968.0px;font-size:24.5px;line-height:24.5px;color:#666;">20</div>
<div class="t" style="left:652.0px;width:400px;text-align:right;top:844.9px;font-size:24.5px;line-height:24.5px;color:#666;">30</div>
<div class="t" style="left:652.0px;width:400px;text-align:right;top:1198.3px;font-size:24.5px;line-height:24.5px;color:#666;">0</div>
<div class="t" style="left:981.8px;top:704.0px;width:400px;height:24.5px;line-height:24.5px;font-size:24.5px;color:#333;text-align:center;transform-origin:0 0;transform:rotate(-90deg);">Avg. Score</div>
<div class="t" style="left:983.6px;top:1183.5px;width:400px;height:24.8px;line-height:24.8px;font-size:24.8px;color:#333;text-align:center;transform-origin:0 0;transform:rotate(-90deg);">Count of Sheet2</div>
<div class="t" style="left:1077.0px;top:497.9px;width:400px;height:26px;line-height:26px;font-size:26px;color:#333;text-align:left;transform-origin:0 0;transform:rotate(-90deg);">35.23</div>
<div class="t" style="left:1117.0px;top:517.6px;width:400px;height:26px;line-height:26px;font-size:26px;color:#333;text-align:left;transform-origin:0 0;transform:rotate(-90deg);">32.38</div>
<div class="t" style="left:1157.0px;top:360.1px;width:400px;height:26px;line-height:26px;font-size:26px;color:#333;text-align:left;transform-origin:0 0;transform:rotate(-90deg);">55.16</div>
<div class="t" style="left:1197.0px;top:416.7px;width:400px;height:26px;line-height:26px;font-size:26px;color:#333;text-align:left;transform-origin:0 0;transform:rotate(-90deg);">46.98</div>
<div class="t" style="left:1237.0px;top:458.4px;width:400px;height:26px;line-height:26px;font-size:26px;color:#333;text-align:left;transform-origin:0 0;transform:rotate(-90deg);">40.94</div>
<div class="t" style="left:1277.0px;top:454.0px;width:400px;height:26px;line-height:26px;font-size:26px;color:#333;text-align:left;transform-origin:0 0;transform:rotate(-90deg);">41.58</div>
<div class="t" style="left:1317.0px;top:393.8px;width:400px;height:26px;line-height:26px;font-size:26px;color:#333;text-align:left;transform-origin:0 0;transform:rotate(-90deg);">50.28</div>
<div class="t" style="left:1357.0px;top:465.4px;width:400px;height:26px;line-height:26px;font-size:26px;color:#333;text-align:left;transform-origin:0 0;transform:rotate(-90deg);">39.93</div>
<div class="t" style="left:1397.0px;top:471.6px;width:400px;height:26px;line-height:26px;font-size:26px;color:#333;text-align:left;transform-origin:0 0;transform:rotate(-90deg);">39.04</div>
<div class="t" style="left:1437.0px;top:484.5px;width:400px;height:26px;line-height:26px;font-size:26px;color:#333;text-align:left;transform-origin:0 0;transform:rotate(-90deg);">37.17</div>
<div class="t" style="left:1477.0px;top:456.0px;width:400px;height:26px;line-height:26px;font-size:26px;color:#333;text-align:left;transform-origin:0 0;transform:rotate(-90deg);">41.29</div>
<div class="t" style="left:1517.0px;top:467.1px;width:400px;height:26px;line-height:26px;font-size:26px;color:#333;text-align:left;transform-origin:0 0;transform:rotate(-90deg);">39.68</div>
<div class="t" style="left:1557.0px;top:419.1px;width:400px;height:26px;line-height:26px;font-size:26px;color:#333;text-align:left;transform-origin:0 0;transform:rotate(-90deg);">46.62</div>
<div class="t" style="left:1597.0px;top:474.8px;width:400px;height:26px;line-height:26px;font-size:26px;color:#333;text-align:left;transform-origin:0 0;transform:rotate(-90deg);">38.58</div>
<div class="t" style="left:1637.0px;top:429.8px;width:400px;height:26px;line-height:26px;font-size:26px;color:#333;text-align:left;transform-origin:0 0;transform:rotate(-90deg);">45.08</div>
<div class="t" style="left:1677.0px;top:444.5px;width:400px;height:26px;line-height:26px;font-size:26px;color:#333;text-align:left;transform-origin:0 0;transform:rotate(-90deg);">42.96</div>
<div class="t" style="left:1717.0px;top:468.7px;width:400px;height:26px;line-height:26px;font-size:26px;color:#333;text-align:left;transform-origin:0 0;transform:rotate(-90deg);">39.45</div>
<div class="t" style="left:1757.0px;top:513.2px;width:400px;height:26px;line-height:26px;font-size:26px;color:#333;text-align:left;transform-origin:0 0;transform:rotate(-90deg);">33.02</div>
<div class="t" style="left:1797.0px;top:439.4px;width:400px;height:26px;line-height:26px;font-size:26px;color:#333;text-align:left;transform-origin:0 0;transform:rotate(-90deg);">43.69</div>
<div class="t" style="left:1837.0px;top:420.9px;width:400px;height:26px;line-height:26px;font-size:26px;color:#333;text-align:left;transform-origin:0 0;transform:rotate(-90deg);">46.37</div>
<div class="t" style="left:1877.0px;top:498.3px;width:400px;height:26px;line-height:26px;font-size:26px;color:#333;text-align:left;transform-origin:0 0;transform:rotate(-90deg);">35.18</div>
<div class="t" style="left:1917.0px;top:450.1px;width:400px;height:26px;line-height:26px;font-size:26px;color:#333;text-align:left;transform-origin:0 0;transform:rotate(-90deg);">42.15</div>
<div class="t" style="left:1957.0px;top:423.4px;width:400px;height:26px;line-height:26px;font-size:26px;color:#333;text-align:left;transform-origin:0 0;transform:rotate(-90deg);">46.00</div>
<div class="t" style="left:1997.0px;top:452.3px;width:400px;height:26px;line-height:26px;font-size:26px;color:#333;text-align:left;transform-origin:0 0;transform:rotate(-90deg);">41.83</div>
<div class="t" style="left:2037.0px;top:471.0px;width:400px;height:26px;line-height:26px;font-size:26px;color:#333;text-align:left;transform-origin:0 0;transform:rotate(-90deg);">39.12</div>
<div class="t" style="left:2077.0px;top:465.1px;width:400px;height:26px;line-height:26px;font-size:26px;color:#333;text-align:left;transform-origin:0 0;transform:rotate(-90deg);">39.98</div>
<div class="t" style="left:2117.0px;top:421.5px;width:400px;height:26px;line-height:26px;font-size:26px;color:#333;text-align:left;transform-origin:0 0;transform:rotate(-90deg);">46.28</div>
<div class="t" style="left:2157.0px;top:426.8px;width:400px;height:26px;line-height:26px;font-size:26px;color:#333;text-align:left;transform-origin:0 0;transform:rotate(-90deg);">45.51</div>
<div class="t" style="left:2197.0px;top:416.7px;width:400px;height:26px;line-height:26px;font-size:26px;color:#333;text-align:left;transform-origin:0 0;transform:rotate(-90deg);">46.98</div>
<div class="t" style="left:888.0px;width:400px;text-align:center;top:1070.7px;font-size:24px;line-height:24px;color:#222;">10</div>
<div class="t" style="left:928.0px;width:400px;text-align:center;top:1168.9px;font-size:24px;line-height:24px;color:#222;">2</div>
<div class="t" style="left:968.0px;width:400px;text-align:center;top:1156.6px;font-size:24px;line-height:24px;color:#222;">3</div>
<div class="t" style="left:1008.0px;width:400px;text-align:center;top:1168.9px;font-size:24px;line-height:24px;color:#222;">2</div>
<div class="t" style="left:1048.0px;width:400px;text-align:center;top:1168.9px;font-size:24px;line-height:24px;color:#222;">2</div>
<div class="t" style="left:1088.0px;width:400px;text-align:center;top:1181.2px;font-size:24px;line-height:24px;color:#222;">1</div>
<div class="t" style="left:1128.0px;width:400px;text-align:center;top:1107.5px;font-size:24px;line-height:24px;color:#222;">7</div>
<div class="t" style="left:1168.0px;width:400px;text-align:center;top:1181.2px;font-size:24px;line-height:24px;color:#222;">1</div>
<div class="t" style="left:1208.0px;width:400px;text-align:center;top:1107.5px;font-size:24px;line-height:24px;color:#222;">7</div>
<div class="t" style="left:1248.0px;width:400px;text-align:center;top:1119.8px;font-size:24px;line-height:24px;color:#222;">6</div>
<div class="t" style="left:1288.0px;width:400px;text-align:center;top:1144.3px;font-size:24px;line-height:24px;color:#222;">4</div>
<div class="t" style="left:1328.0px;width:400px;text-align:center;top:1181.2px;font-size:24px;line-height:24px;color:#222;">1</div>
<div class="t" style="left:1368.0px;width:400px;text-align:center;top:1144.3px;font-size:24px;line-height:24px;color:#222;">4</div>
<div class="t" style="left:1408.0px;width:400px;text-align:center;top:935.6px;font-size:24px;line-height:24px;color:#222;">21</div>
<div class="t" style="left:1448.0px;width:400px;text-align:center;top:1119.8px;font-size:24px;line-height:24px;color:#222;">6</div>
<div class="t" style="left:1488.0px;width:400px;text-align:center;top:1132.1px;font-size:24px;line-height:24px;color:#222;">5</div>
<div class="t" style="left:1528.0px;width:400px;text-align:center;top:923.4px;font-size:24px;line-height:24px;color:#222;">22</div>
<div class="t" style="left:1568.0px;width:400px;text-align:center;top:1181.2px;font-size:24px;line-height:24px;color:#222;">1</div>
<div class="t" style="left:1608.0px;width:400px;text-align:center;top:1181.2px;font-size:24px;line-height:24px;color:#222;">1</div>
<div class="t" style="left:1648.0px;width:400px;text-align:center;top:1107.5px;font-size:24px;line-height:24px;color:#222;">7</div>
<div class="t" style="left:1688.0px;width:400px;text-align:center;top:1168.9px;font-size:24px;line-height:24px;color:#222;">2</div>
<div class="t" style="left:1728.0px;width:400px;text-align:center;top:1095.2px;font-size:24px;line-height:24px;color:#222;">8</div>
<div class="t" style="left:1768.0px;width:400px;text-align:center;top:1144.3px;font-size:24px;line-height:24px;color:#222;">4</div>
<div class="t" style="left:1808.0px;width:400px;text-align:center;top:776.1px;font-size:24px;line-height:24px;color:#222;">34</div>
<div class="t" style="left:1848.0px;width:400px;text-align:center;top:1009.3px;font-size:24px;line-height:24px;color:#222;">15</div>
<div class="t" style="left:1888.0px;width:400px;text-align:center;top:1181.2px;font-size:24px;line-height:24px;color:#222;">1</div>
<div class="t" style="left:1928.0px;width:400px;text-align:center;top:1058.4px;font-size:24px;line-height:24px;color:#222;">11</div>
<div class="t" style="left:1968.0px;width:400px;text-align:center;top:1144.3px;font-size:24px;line-height:24px;color:#222;">4</div>
<div class="t" style="left:2008.0px;width:400px;text-align:center;top:1095.2px;font-size:24px;line-height:24px;color:#222;">8</div>
<div class="t" style="left:1076.5px;top:1635.5px;width:400px;height:25px;line-height:25px;font-size:25px;color:#666;text-align:right;transform-origin:0 0;transform:rotate(-90deg);">Andhra Pradesh</div>
<div class="t" style="left:1116.5px;top:1635.5px;width:400px;height:25px;line-height:25px;font-size:25px;color:#666;text-align:right;transform-origin:0 0;transform:rotate(-90deg);">Arunachal Pradesh</div>
<div class="t" style="left:1156.5px;top:1635.5px;width:400px;height:25px;line-height:25px;font-size:25px;color:#666;text-align:right;transform-origin:0 0;transform:rotate(-90deg);">Assam</div>
<div class="t" style="left:1196.5px;top:1635.5px;width:400px;height:25px;line-height:25px;font-size:25px;color:#666;text-align:right;transform-origin:0 0;transform:rotate(-90deg);">Bihar</div>
<div class="t" style="left:1236.5px;top:1635.5px;width:400px;height:25px;line-height:25px;font-size:25px;color:#666;text-align:right;transform-origin:0 0;transform:rotate(-90deg);">Chandigarh</div>
<div class="t" style="left:1276.5px;top:1635.5px;width:400px;height:25px;line-height:25px;font-size:25px;color:#666;text-align:right;transform-origin:0 0;transform:rotate(-90deg);">Chhattisgarh</div>
<div class="t" style="left:1316.5px;top:1635.5px;width:400px;height:25px;line-height:25px;font-size:25px;color:#666;text-align:right;transform-origin:0 0;transform:rotate(-90deg);">Delhi</div>
<div class="t" style="left:1356.5px;top:1635.5px;width:400px;height:25px;line-height:25px;font-size:25px;color:#666;text-align:right;transform-origin:0 0;transform:rotate(-90deg);">Goa</div>
<div class="t" style="left:1396.5px;top:1635.5px;width:400px;height:25px;line-height:25px;font-size:25px;color:#666;text-align:right;transform-origin:0 0;transform:rotate(-90deg);">Gujarat</div>
<div class="t" style="left:1436.5px;top:1635.5px;width:400px;height:25px;line-height:25px;font-size:25px;color:#666;text-align:right;transform-origin:0 0;transform:rotate(-90deg);">Haryana</div>
<div class="t" style="left:1476.5px;top:1635.5px;width:400px;height:25px;line-height:25px;font-size:25px;color:#666;text-align:right;transform-origin:0 0;transform:rotate(-90deg);">Himachal Pradesh</div>
<div class="t" style="left:1516.5px;top:1635.5px;width:400px;height:25px;line-height:25px;font-size:25px;color:#666;text-align:right;transform-origin:0 0;transform:rotate(-90deg);">Jammu and Kashmir</div>
<div class="t" style="left:1556.5px;top:1635.5px;width:400px;height:25px;line-height:25px;font-size:25px;color:#666;text-align:right;transform-origin:0 0;transform:rotate(-90deg);">Jharkhand</div>
<div class="t" style="left:1596.5px;top:1635.5px;width:400px;height:25px;line-height:25px;font-size:25px;color:#666;text-align:right;transform-origin:0 0;transform:rotate(-90deg);">Karnataka</div>
<div class="t" style="left:1636.5px;top:1635.5px;width:400px;height:25px;line-height:25px;font-size:25px;color:#666;text-align:right;transform-origin:0 0;transform:rotate(-90deg);">Kerala</div>
<div class="t" style="left:1676.5px;top:1635.5px;width:400px;height:25px;line-height:25px;font-size:25px;color:#666;text-align:right;transform-origin:0 0;transform:rotate(-90deg);">Madhya Pradesh</div>
<div class="t" style="left:1716.5px;top:1635.5px;width:400px;height:25px;line-height:25px;font-size:25px;color:#666;text-align:right;transform-origin:0 0;transform:rotate(-90deg);">Maharashtra</div>
<div class="t" style="left:1756.5px;top:1635.5px;width:400px;height:25px;line-height:25px;font-size:25px;color:#666;text-align:right;transform-origin:0 0;transform:rotate(-90deg);">Manipur</div>
<div class="t" style="left:1796.5px;top:1635.5px;width:400px;height:25px;line-height:25px;font-size:25px;color:#666;text-align:right;transform-origin:0 0;transform:rotate(-90deg);">Meghalaya</div>
<div class="t" style="left:1836.5px;top:1635.5px;width:400px;height:25px;line-height:25px;font-size:25px;color:#666;text-align:right;transform-origin:0 0;transform:rotate(-90deg);">Odisha</div>
<div class="t" style="left:1876.5px;top:1635.5px;width:400px;height:25px;line-height:25px;font-size:25px;color:#666;text-align:right;transform-origin:0 0;transform:rotate(-90deg);">Pondicherry</div>
<div class="t" style="left:1916.5px;top:1635.5px;width:400px;height:25px;line-height:25px;font-size:25px;color:#666;text-align:right;transform-origin:0 0;transform:rotate(-90deg);">Punjab</div>
<div class="t" style="left:1956.5px;top:1635.5px;width:400px;height:25px;line-height:25px;font-size:25px;color:#666;text-align:right;transform-origin:0 0;transform:rotate(-90deg);">Rajasthan</div>
<div class="t" style="left:1996.5px;top:1635.5px;width:400px;height:25px;line-height:25px;font-size:25px;color:#666;text-align:right;transform-origin:0 0;transform:rotate(-90deg);">Tamil Nadu</div>
<div class="t" style="left:2036.5px;top:1635.5px;width:400px;height:25px;line-height:25px;font-size:25px;color:#666;text-align:right;transform-origin:0 0;transform:rotate(-90deg);">Telangana</div>
<div class="t" style="left:2076.5px;top:1635.5px;width:400px;height:25px;line-height:25px;font-size:25px;color:#666;text-align:right;transform-origin:0 0;transform:rotate(-90deg);">Tripura</div>
<div class="t" style="left:2116.5px;top:1635.5px;width:400px;height:25px;line-height:25px;font-size:25px;color:#666;text-align:right;transform-origin:0 0;transform:rotate(-90deg);">Uttar Pradesh</div>
<div class="t" style="left:2156.5px;top:1635.5px;width:400px;height:25px;line-height:25px;font-size:25px;color:#666;text-align:right;transform-origin:0 0;transform:rotate(-90deg);">Uttarakhand</div>
<div class="t" style="left:2196.5px;top:1635.5px;width:400px;height:25px;line-height:25px;font-size:25px;color:#666;text-align:right;transform-origin:0 0;transform:rotate(-90deg);">West Bengal</div>
<div class="b" style="left:2047px;top:838px;width:387px;height:138px;background:#bdbdbd;filter:blur(1.5px);opacity:0.8;"></div>
<div class="b" style="left:2044px;top:835px;width:387px;height:138px;background:#ffffff;border:1px solid #cfcfcf;box-sizing:border-box;"></div>
<div class="t" style="left:2060.5px;top:856.4px;font-size:26.5px;line-height:26.5px;color:#666;">State:</div>
<div class="t" style="left:2060.5px;top:892.2px;font-size:26.5px;line-height:26.5px;color:#666;">Count of Sheet2:</div>
<div class="t" style="left:2060.5px;top:928.8px;font-size:26px;line-height:26px;color:#666;">Avg. Score:</div>
<div class="t" style="left:2267.7px;top:856.2px;font-size:26.7px;line-height:26.7px;color:#222;-webkit-text-stroke:0.7px #222;">Tamil Nadu</div>
<div class="t" style="left:2267.7px;top:892.3px;font-size:26.4px;line-height:26.4px;color:#222;-webkit-text-stroke:0.7px #222;">34</div>
<div class="t" style="left:2267.7px;top:927.9px;font-size:27px;line-height:27px;color:#222;-webkit-text-stroke:0.7px #222;">41.83</div>
</body></html>
